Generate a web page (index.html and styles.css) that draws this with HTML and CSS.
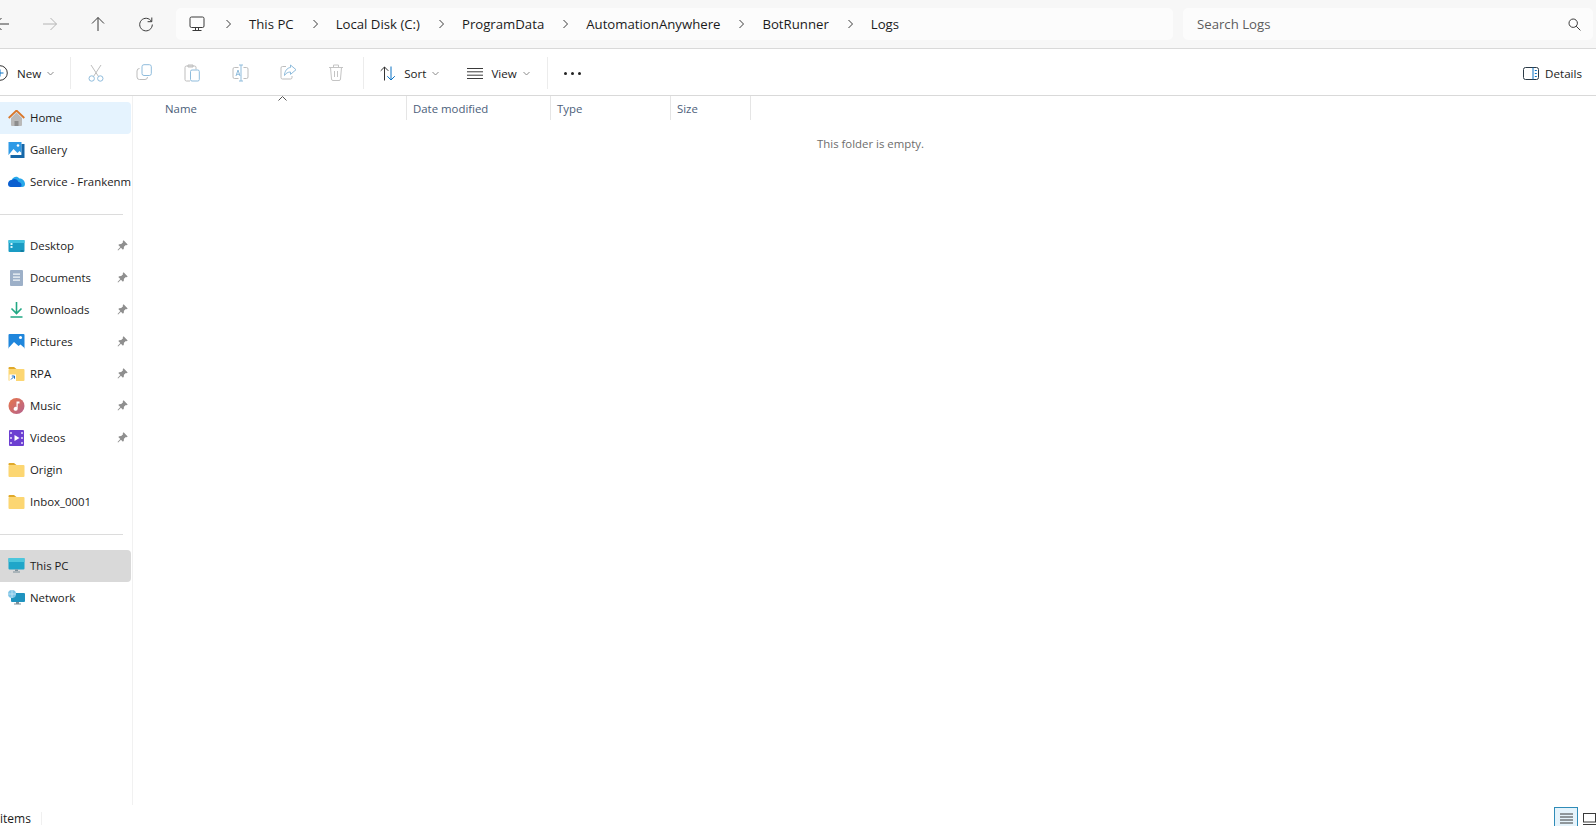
FILE: index.html
```html
<!DOCTYPE html>
<html lang="en">
  <head>
    <meta charset="UTF-8" />
    <title>Logs - File Explorer</title>
    <link rel="stylesheet" href="styles.css">
  </head>
  <body>
    <div class="window">
      <!-- Address row -->
      <div class="address-row">
        <div class="nav">
          <div class="nav-btn"><svg width="16" height="16" viewBox="0 0 16 16" class="line dark"><path d="M15 8H1.500M7.500 2l-6 6 6 6"/></svg></div>
          <div class="nav-btn"><svg width="16" height="16" viewBox="0 0 16 16" class="line faded"><path d="M1 8h13.500M8.500 2l6 6-6 6"/></svg></div>
          <div class="nav-btn"><svg width="16" height="16" viewBox="0 0 16 16" class="line dark"><path d="M8 15V1.500M2 7.500l6-6 6 6"/></svg></div>
          <div class="nav-btn"><svg width="16" height="16" viewBox="0 0 16 16" class="line dark"><path d="M13.500 5.500A6.300 6.300 0 1 0 14.300 8.500M13.800 1.500v4.200H9.600"/></svg></div>
        </div>
        <div class="address">
          <svg class="line dark pc-icon" width="16" height="16" viewBox="0 0 16 16"><rect x="1" y="1" width="14" height="10.500" rx="1.500"/><path d="M6.500 11.500v2.500M9.500 11.500v2.500M3.500 14.500h9"/></svg>
          <svg class="line dark" width="8" height="10" viewBox="0 0 8 10"><path d="M2.500 1l4 4-4 4"/></svg>
          <span>This PC</span>
          <svg class="line dark" width="8" height="10" viewBox="0 0 8 10"><path d="M2.500 1l4 4-4 4"/></svg>
          <span>Local Disk (C:)</span>
          <svg class="line dark" width="8" height="10" viewBox="0 0 8 10"><path d="M2.500 1l4 4-4 4"/></svg>
          <span>ProgramData</span>
          <svg class="line dark" width="8" height="10" viewBox="0 0 8 10"><path d="M2.500 1l4 4-4 4"/></svg>
          <span>AutomationAnywhere</span>
          <svg class="line dark" width="8" height="10" viewBox="0 0 8 10"><path d="M2.500 1l4 4-4 4"/></svg>
          <span>BotRunner</span>
          <svg class="line dark" width="8" height="10" viewBox="0 0 8 10"><path d="M2.500 1l4 4-4 4"/></svg>
          <span>Logs</span>
        </div>
        <div class="search">
          <span>Search Logs</span>
          <svg class="line dark" width="13" height="13" viewBox="0 0 13 13"><circle cx="5.200" cy="5.200" r="4.200"/><path d="M8.200 8.200l4.200 4.200"/></svg>
        </div>
      </div>

      <!-- Toolbar -->
      <div class="toolbar">
        <div class="new-btn">
          <svg class="line" width="16" height="16" viewBox="0 0 16 16"><circle cx="8" cy="8" r="7.300" stroke="#333"/><path d="M8 4.500v7M4.500 8h7" stroke="#0a72c4"/></svg>
          <span>New</span>
          <svg class="line caret" width="7" height="5" viewBox="0 0 7 5"><path d="M.5 1l3 3 3-3"/></svg>
        </div>
        <div class="tool-sep sep-first"></div>
        <div class="tool-icons">
          <div class="tool-icon"><svg class="line" width="16" height="18" viewBox="0 0 16 18"><path d="M3 1l7.500 11.500M13 1L5.500 12.500" stroke="#bdbdbd"/><circle cx="3.700" cy="14.500" r="2.700" stroke="#8fbcdc"/><circle cx="12.300" cy="14.500" r="2.700" stroke="#8fbcdc"/></svg></div>
          <div class="tool-icon"><svg class="line" width="16" height="16" viewBox="0 0 16 16"><path d="M3.500 4.500A2.500 2.500 0 0 0 1 7v6a2.500 2.500 0 0 0 2.500 2.500H9A2.500 2.500 0 0 0 11.500 13" stroke="#bdbdbd"/><rect x="6" y=".7" width="9.300" height="10.800" rx="2" stroke="#8fbcdc"/></svg></div>
          <div class="tool-icon"><svg class="line" width="16" height="18" viewBox="0 0 16 18"><path d="M6 17H2.500A1.500 1.500 0 0 1 1 15.500v-12A1.500 1.500 0 0 1 2.500 2h8A1.500 1.500 0 0 1 12 3.500v2M4 1h5v2H4z" stroke="#bdbdbd"/><rect x="6.500" y="6" width="8.800" height="11" rx="1.500" stroke="#8fbcdc"/></svg></div>
          <div class="tool-icon"><svg class="line" width="17" height="18" viewBox="0 0 17 18"><path d="M6.500 3.500H2.500A1.500 1.500 0 0 0 1 5v8a1.500 1.500 0 0 0 1.500 1.500h4M11.500 3.500h3A1.500 1.500 0 0 1 16 5v8a1.500 1.500 0 0 1-1.500 1.500h-3" stroke="#bdbdbd"/><path d="M7 1h4M7 17h4M9 1v16M4 12l2-6 2 6M4.700 10.300h2.600" stroke="#8fbcdc"/></svg></div>
          <div class="tool-icon"><svg class="line" width="17" height="16" viewBox="0 0 17 16"><path d="M6 2.500H2.500A1.500 1.500 0 0 0 1 4v9.500A1.500 1.500 0 0 0 2.500 15h8a1.500 1.500 0 0 0 1.500-1.500V12" stroke="#bdbdbd"/><path d="M10.500 1l5.500 4.700-5.500 4.700V8C8 8 6 9 4.500 11.500 4.500 7.500 7 3.700 10.500 3.500z" stroke="#8fbcdc"/></svg></div>
          <div class="tool-icon"><svg class="line" width="16" height="17" viewBox="0 0 16 17" stroke="#c4c4c4"><path d="M1 3.500h14M5.500 3.500V1h5v2.500M2.500 3.500l1 11.500a1.500 1.500 0 0 0 1.500 1.500h6a1.500 1.500 0 0 0 1.500-1.500l1-11.500M6.500 7v6M9.500 7v6"/></svg></div>
        </div>
        <div class="tool-sep"></div>
        <div class="tool-btn sort-btn">
          <svg class="line" width="16" height="15" viewBox="0 0 16 15"><path d="M4.500 14.500V1M.7 4.800L4.500 1l3.800 3.800" stroke="#333"/><path d="M11 .5V14M7.300 10.200L11 14l3.800-3.800" stroke="#0a72c4"/></svg>
          <span>Sort</span>
          <svg class="line caret" width="7" height="5" viewBox="0 0 7 5"><path d="M.5 1l3 3 3-3"/></svg>
        </div>
        <div class="tool-btn view-btn">
          <svg class="line dark" width="16" height="11" viewBox="0 0 16 11"><path d="M0 .5h16M0 3.800h16M0 7.200h16M0 10.500h16"/></svg>
          <span>View</span>
          <svg class="line caret" width="7" height="5" viewBox="0 0 7 5"><path d="M.5 1l3 3 3-3"/></svg>
        </div>
        <div class="tool-sep sep-view"></div>
        <div class="dots"><i></i><i></i><i></i></div>
        <div class="details-btn">
          <svg class="line" width="16" height="13" viewBox="0 0 16 13"><rect x=".5" y=".5" width="15" height="12" rx="2" stroke="#2b3a46"/><path d="M10 .5v12" stroke="#0a72c4"/><path d="M11.800 3.500h2M11.800 6.500h2M11.800 9.500h2" stroke="#0a72c4"/></svg>
          <span>Details</span>
        </div>
      </div>

      <div class="main">
        <!-- Navigation pane -->
        <div class="sidebar">
          <div class="nav-row home">
            <svg width="17" height="16" viewBox="0 0 17 16"><path d="M3 8v7a1 1 0 0 0 1 1h9a1 1 0 0 0 1-1V8L8.500 2.500z" fill="#b9b9b9"/><path d="M6.500 16v-5h4v5z" fill="#8c8c8c"/><path d="M.7 8L8.500.5 16.300 8" fill="none" stroke="#d9772b" stroke-width="1.800"/></svg>
            <span>Home</span>
          </div>
          <div class="nav-row">
            <svg width="16" height="16" viewBox="0 0 16 16"><path d="M0 0h13v13H0z" fill="#2e9ae6"/><path d="M0 13l5-6 4 4 2-2 2 2v2H0z" fill="#fff"/><circle cx="9.500" cy="3.500" r="1.300" fill="#fff"/><path d="M2 13h11V2h3v14H2z" fill="#1667a8"/></svg>
            <span>Gallery</span>
          </div>
          <div class="nav-row">
            <svg width="17" height="11" viewBox="0 0 17 11"><path d="M4.500 11a3.500 3.500 0 0 1-1-6.900C5 .8 9 -.5 11.500 2.500 14.500 2.300 17 5 17 8c0 1.700-1 3-3 3z" fill="#28a8ea"/><path d="M0 8c0-2.500 2-4 4-4 2.500-2 5.500-.5 6.500 2 1.500 0 2.500 1 3 2.500.3 1-.3 2.500-2 2.500H3a3 3 0 0 1-3-3z" fill="#0a5fd0"/></svg>
            <span>Service - Frankenm</span>
          </div>
          <div class="side-sep"></div>

          <div class="nav-row">
            <svg width="16" height="12" viewBox="0 0 16 12"><rect width="16" height="12" rx="1" fill="#1a9cc4"/><path d="M0 0h16v3H0z" fill="#43c3e0"/><path d="M2 3h2v2H2zM2 6h2v2H2z" fill="#d9f4fb"/><path d="M12 10.500h3v1h-3z" fill="#0a5d7c"/></svg>
            <span>Desktop</span>
            <svg class="pin" width="11" height="11" viewBox="0 0 10 10"><path d="M6 .3L9.700 4 8.900 4.800 8 4.500 6.300 6.200 6.200 8 5.400 8.800 3.600 7 1 9.500.5 9 3 6.400 1.200 4.600 2 3.800 3.800 3.700 5.500 2 5.200 1.100z"/></svg>
          </div>
          <div class="nav-row">
            <svg width="16" height="16" viewBox="0 0 16 16"><rect x="1.500" y="0" width="13" height="16" rx="1" fill="#9db0c8"/><path d="M4.500 3.500h7v1.200h-7zM4.500 6.500h7v1.200h-7zM4.500 9.500h7v1.200h-7z" fill="#f4f7fa"/></svg>
            <span>Documents</span>
            <svg class="pin" width="11" height="11" viewBox="0 0 10 10"><path d="M6 .3L9.700 4 8.900 4.800 8 4.500 6.300 6.200 6.200 8 5.400 8.800 3.600 7 1 9.500.5 9 3 6.400 1.200 4.600 2 3.800 3.800 3.700 5.500 2 5.200 1.100z"/></svg>
          </div>
          <div class="nav-row">
            <svg width="16" height="16" viewBox="0 0 16 16" fill="none" stroke="#22a884" stroke-width="1.600"><path d="M8 0v11M3 6.500l5 5 5-5M2 15h12"/></svg>
            <span>Downloads</span>
            <svg class="pin" width="11" height="11" viewBox="0 0 10 10"><path d="M6 .3L9.700 4 8.900 4.800 8 4.500 6.300 6.200 6.200 8 5.400 8.800 3.600 7 1 9.500.5 9 3 6.400 1.200 4.600 2 3.800 3.800 3.700 5.500 2 5.200 1.100z"/></svg>
          </div>
          <div class="nav-row">
            <svg width="16" height="15" viewBox="0 0 16 15"><path d="M1 0h14a1 1 0 0 1 1 1v13a1 1 0 0 1-1 1H1a1 1 0 0 1-1-1V1a1 1 0 0 1 1-1z" fill="#1f86dc"/><path d="M0 14l5.500-6L10 12l2-1.500 4 3.500v1H0z" fill="#fff"/><circle cx="12" cy="3.500" r="1.500" fill="#fff"/></svg>
            <span>Pictures</span>
            <svg class="pin" width="11" height="11" viewBox="0 0 10 10"><path d="M6 .3L9.700 4 8.900 4.800 8 4.500 6.300 6.200 6.200 8 5.400 8.800 3.600 7 1 9.500.5 9 3 6.400 1.200 4.600 2 3.800 3.800 3.700 5.500 2 5.200 1.100z"/></svg>
          </div>
          <div class="nav-row">
            <svg width="16" height="14" viewBox="0 0 16 14"><path d="M0 1a1 1 0 0 1 1-1h4.500L8 2H0z" fill="#e0a92a"/><rect y="2" width="16" height="12" rx="1" fill="#fcd672"/><rect x="1" y="7.500" width="6.500" height="6.500" fill="#fff"/><path d="M2.500 12.500l3-3M3.300 9h2.700v2.700" fill="none" stroke="#1a6dc2"/></svg>
            <span>RPA</span>
            <svg class="pin" width="11" height="11" viewBox="0 0 10 10"><path d="M6 .3L9.700 4 8.900 4.800 8 4.500 6.300 6.200 6.200 8 5.400 8.800 3.600 7 1 9.500.5 9 3 6.400 1.200 4.600 2 3.800 3.800 3.700 5.500 2 5.200 1.100z"/></svg>
          </div>
          <div class="nav-row">
            <svg width="16" height="16" viewBox="0 0 16 16"><defs><linearGradient id="music-g" x1="0" y1="0" x2="1" y2="1"><stop offset="0" stop-color="#e8764a"/><stop offset="1" stop-color="#b4628f"/></linearGradient></defs><circle cx="8" cy="8" r="8" fill="url(#music-g)"/><path d="M8 3.500h3v2H9.200v5.300A2 2 0 1 1 8 9z" fill="#fff"/></svg>
            <span>Music</span>
            <svg class="pin" width="11" height="11" viewBox="0 0 10 10"><path d="M6 .3L9.700 4 8.900 4.800 8 4.500 6.300 6.200 6.200 8 5.400 8.800 3.600 7 1 9.500.5 9 3 6.400 1.200 4.600 2 3.800 3.800 3.700 5.500 2 5.200 1.100z"/></svg>
          </div>
          <div class="nav-row">
            <svg width="16" height="16" viewBox="0 0 16 16"><rect width="15" height="16" x=".5" rx="1" fill="#6c3fd1"/><path d="M6 5l5 3-5 3z" fill="#fff"/><path d="M1.500 2h2v2h-2zM1.500 7h2v2h-2zM1.500 12h2v2h-2zM12.500 2h2v2h-2zM12.500 7h2v2h-2zM12.500 12h2v2h-2z" fill="#c7b3f2"/></svg>
            <span>Videos</span>
            <svg class="pin" width="11" height="11" viewBox="0 0 10 10"><path d="M6 .3L9.700 4 8.900 4.800 8 4.500 6.300 6.200 6.200 8 5.400 8.800 3.600 7 1 9.500.5 9 3 6.400 1.200 4.600 2 3.800 3.800 3.700 5.500 2 5.200 1.100z"/></svg>
          </div>
          <div class="nav-row">
            <svg width="16" height="14" viewBox="0 0 16 14"><path d="M0 1a1 1 0 0 1 1-1h4.500L8 2H0z" fill="#e0a92a"/><rect y="2" width="16" height="12" rx="1" fill="#fcd672"/></svg>
            <span>Origin</span>
          </div>
          <div class="nav-row">
            <svg width="16" height="14" viewBox="0 0 16 14"><path d="M0 1a1 1 0 0 1 1-1h4.500L8 2H0z" fill="#e0a92a"/><rect y="2" width="16" height="12" rx="1" fill="#fcd672"/></svg>
            <span>Inbox_0001</span>
          </div>
          <div class="side-sep"></div>

          <div class="nav-row this-pc">
            <svg width="16" height="15" viewBox="0 0 16 15"><rect width="16" height="11.500" rx="1" fill="#1fa6c9"/><path d="M0 0h16v4H0z" fill="#4cc6dc"/><path d="M6.500 11.500h3V13h-3zM4.500 13.500h7v1h-7z" fill="#7d8f99"/></svg>
            <span>This PC</span>
          </div>
          <div class="nav-row">
            <svg width="17" height="15" viewBox="0 0 17 15"><rect x="3" y="3" width="14" height="9" rx="1" fill="#1f93bf"/><path d="M8 12h3v1.500H8zM6 13.500h7v1H6z" fill="#7d8f99"/><circle cx="4" cy="4" r="4" fill="#7fc4e6"/><path d="M0 4h8M4 0v8" stroke="#d6eef9" stroke-width=".7"/></svg>
            <span>Network</span>
          </div>
        </div>

        <!-- File list -->
        <div class="content">
          <div class="columns">
            <div class="col col-name">Name<svg class="line sort-caret" width="9" height="5" viewBox="0 0 9 5"><path d="M.5 4.500l4-4 4 4"/></svg></div>
            <div class="col col-date">Date modified</div>
            <div class="col col-type">Type</div>
            <div class="col col-size">Size</div>
          </div>
          <div class="empty">This folder is empty.</div>
        </div>
      </div>

      <!-- Status bar -->
      <div class="statusbar">
        <span class="count">items</span>
        <div class="status-sep"></div>
        <div class="views">
          <div class="view-toggle active"><svg class="line dark" width="13" height="12" viewBox="0 0 13 12"><path d="M0 1h13M0 4h13M0 7h13M0 10h13"/></svg></div>
          <div class="view-toggle"><svg class="line dark" width="13" height="12" viewBox="0 0 13 12"><rect x=".5" y=".5" width="12" height="8.500"/><path d="M0 11.500h13"/></svg></div>
        </div>
      </div>
    </div>
  </body>
</html>
```

FILE: styles.css
```css
body {
  margin: 0;
  background: white;
  font-family: "Open Sans", "Noto Sans", sans-serif;
  color: #1b1b1b;
  overflow: hidden;
}

.window {
  display: flex;
  flex-direction: column;
  height: 826px;
  overflow: hidden;
}

.line {
  fill: none;
  stroke-width: 1;
  flex: none;
}

.line.dark {
  stroke: #3a3a3a;
}

.line.faded {
  stroke: #b4b4b4;
}

.caret {
  stroke: #8a8a8a;
  margin-left: -2px;
}

/* Address row */
.address-row {
  display: flex;
  align-items: center;
  height: 48px;
  flex: none;
  background: #f7f7f7;
  border-bottom: 1px solid #d9d9d9;
  padding-right: 3px;
}

.nav {
  display: flex;
  margin-left: -22px;
  margin-right: 6px;
}

.nav-btn {
  width: 48px;
  display: flex;
  justify-content: center;
}

.address {
  display: flex;
  align-items: center;
  gap: 17px;
  flex: 1;
  height: 32px;
  padding-left: 13px;
  background: #fcfcfc;
  border-radius: 5px;
  font-size: 13.200px;
}

.pc-icon {
  margin-right: 2px;
}

.search {
  display: flex;
  align-items: center;
  justify-content: space-between;
  width: 410px;
  box-sizing: border-box;
  height: 32px;
  margin-left: 10px;
  padding: 0 12px 0 14px;
  background: #fcfcfc;
  border-radius: 5px;
  font-size: 13.200px;
  color: #5c5c5c;
}

/* Toolbar */
.toolbar {
  display: flex;
  align-items: center;
  height: 46px;
  flex: none;
  border-bottom: 1px solid #d9d9d9;
  font-size: 11.600px;
}

.toolbar > * {
  position: relative;
  top: 1px;
}

.new-btn {
  display: flex;
  align-items: center;
  gap: 8px;
  margin-left: -8px;
}

.new-btn span {
  margin-left: 1px;
}

.tool-sep {
  flex: none;
  width: 1px;
  height: 32px;
  background: #ececec;
}

.sep-first {
  margin-left: 16px;
}

.tool-icons {
  display: flex;
  margin: 0 3px 0 1px;
}

.tool-icon {
  width: 48px;
  display: flex;
  justify-content: center;
}

.tool-btn {
  display: flex;
  align-items: center;
  gap: 8px;
}

.sort-btn {
  margin-left: 16px;
}

.view-btn {
  margin-left: 28px;
}

.sep-view {
  margin-left: 17px;
}

.dots {
  display: flex;
  gap: 4px;
  margin-left: 16px;
}

.dots i {
  width: 3px;
  height: 3px;
  background: #222;
  border-radius: 50%;
}

.details-btn {
  display: flex;
  align-items: center;
  gap: 6px;
  margin-left: auto;
  margin-right: 14px;
}

/* Navigation pane */
.main {
  display: flex;
  flex: 1;
  min-height: 0;
}

.sidebar {
  width: 133px;
  flex: none;
  box-sizing: border-box;
  padding: 6px 0 0;
  border-right: 1px solid #f1f1f1;
  font-size: 11.400px;
}

.nav-row {
  position: relative;
  display: flex;
  align-items: center;
  gap: 5px;
  width: 131px;
  height: 32px;
  padding: 0 0 1px 8px;
  box-sizing: border-box;
  white-space: nowrap;
  overflow: hidden;
  border-radius: 0 4px 4px 0;
}

.nav-row > svg:first-child {
  flex: none;
  width: 17px;
}

.home {
  background: #e5f3fe;
}

.this-pc {
  background: #d9d9d9;
}

.pin {
  position: absolute;
  right: 3px;
  top: 10px;
  fill: #8f8f8f;
}

.side-sep {
  width: 123px;
  height: 1px;
  margin: 16px 0 15px;
  background: #dcdcdc;
}

/* File list */
.content {
  flex: 1;
}

.columns {
  display: flex;
  height: 24px;
  font-size: 11.400px;
  color: #4c607a;
}

.col {
  position: relative;
  display: flex;
  align-items: center;
  box-sizing: border-box;
  padding-left: 6px;
  border-right: 1px solid #e5e5e5;
}

.col-name {
  width: 274px;
  padding-left: 32px;
}

.col-date {
  width: 144px;
}

.col-type {
  width: 120px;
}

.col-size {
  width: 80px;
}

.sort-caret {
  position: absolute;
  left: 145px;
  top: 0;
  stroke: #555;
}

.empty {
  margin-top: 16px;
  text-align: center;
  padding-left: 12px;
  font-size: 11.400px;
  color: #6d6d6d;
}

/* Status bar */
.statusbar {
  display: flex;
  align-items: flex-end;
  height: 21px;
  flex: none;
  font-size: 12px;
}

.count {
  line-height: 12px;
  margin-bottom: 1px;
  white-space: nowrap;
}

.status-sep {
  width: 1px;
  height: 13px;
  margin-left: 10px;
  margin-bottom: 1px;
  background: #f0f0f0;
}

.views {
  display: flex;
  gap: 5px;
  margin-left: auto;
}

.view-toggle {
  display: flex;
  justify-content: center;
  align-items: flex-end;
  width: 13px;
  height: 19px;
  padding-bottom: 1px;
  box-sizing: border-box;
}

.view-toggle.active {
  width: 24px;
  background: #e5f3fb;
  border: 1px solid #2f8cb8;
  border-bottom: 0;
}
```
